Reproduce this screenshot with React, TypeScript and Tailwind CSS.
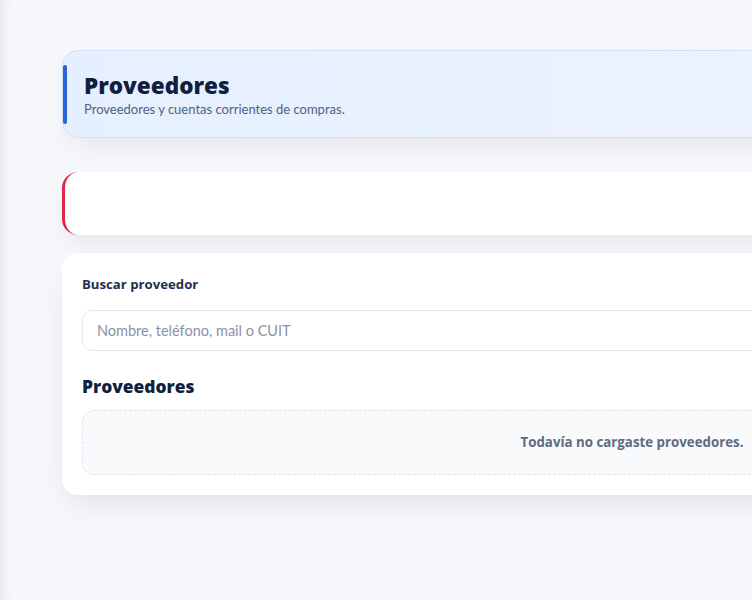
export default function App() {
  const heavy = { fontFamily: '"Open Sans", Lato, sans-serif' }
  return (
    <div
      className="min-h-screen w-full overflow-hidden bg-[#f5f7fb] shadow-[inset_10px_0_14px_-10px_rgba(15,23,42,0.10)]"
      style={{ fontFamily: 'Lato, "Noto Sans", sans-serif' }}
    >
      <div className="ml-[62px] w-[1140px] pt-[50px] pb-16 flex flex-col">
        {/* Page header */}
        <div className="relative h-[88px] rounded-2xl border border-[#d3e1f5] bg-gradient-to-r from-[#e5efff] to-[#f1f5fc] shadow-[0_14px_30px_-12px_rgba(15,23,42,0.10)] flex flex-col justify-center pl-[21px]">
          <div className="absolute left-0 top-[14px] bottom-[13px] w-[4px] rounded-full bg-[#2b63d9]" />
          <h1 className="text-[22.5px] leading-[28px] font-extrabold text-[#0f1f3d]" style={heavy}>
            Proveedores
          </h1>
          <p className="mt-[1px] text-[13px] leading-[16px] text-[#4f6282]">
            Proveedores y cuentas corrientes de compras.
          </p>
        </div>

        {/* Alert placeholder */}
        <div className="mt-[34px] h-[63px] rounded-2xl border-l-[3px] border-[#d9294a] bg-white shadow-[0_12px_24px_-6px_rgba(15,23,42,0.08)]" />

        {/* Search + list */}
        <div className="mt-[18px] rounded-2xl bg-white px-5 pt-[22px] pb-5 shadow-[0_14px_30px_-8px_rgba(15,23,42,0.10)]">
          <label className="block text-[13.2px] leading-[18px] font-bold text-[#1f2f4d]" style={heavy}>
            Buscar proveedor
          </label>
          <input
            className="mt-[17px] block h-[41px] w-full rounded-[10px] border border-[#e6eaf0] bg-white px-[14px] text-[14.5px] text-[#1f2f4d] placeholder:text-[#8a93a3] outline-none"
            style={{ fontFamily: 'Lato, "Noto Sans", sans-serif' }}
            placeholder="Nombre, teléfono, mail o CUIT"
          />
          <h2 className="mt-[24px] text-[17.4px] leading-[22px] font-extrabold text-[#0f1f3d]" style={heavy}>
            Proveedores
          </h2>
          <div className="mt-[13px] h-[65px] rounded-xl border border-dashed border-[#dbe3ee] bg-[#f8fafc] flex items-center justify-center">
            <span className="text-[13.3px] font-bold text-[#5f6b80]" style={heavy}>
              Todavía no cargaste proveedores.
            </span>
          </div>
        </div>
      </div>
    </div>
  )
}
